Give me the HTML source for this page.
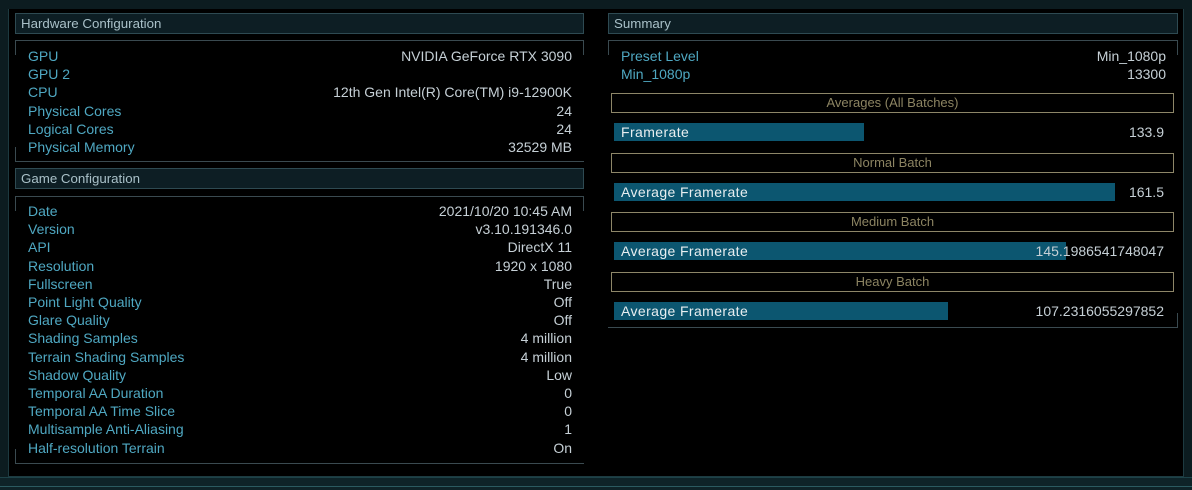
<!DOCTYPE html>
<html><head><meta charset="utf-8"><style>
*{margin:0;padding:0;box-sizing:border-box}
body{width:1192px;height:490px;background:#0c1c20;position:relative;overflow:hidden;font-family:"Liberation Sans",sans-serif;font-size:14px}
.inner{position:absolute;left:8px;top:9px;width:1176px;height:468px;background:#000;border:1px solid #1d3a40;border-top:none}
.bot{position:absolute;left:0;top:477px;width:1192px;height:13px;background:#0e2328;border-top:1px solid #1d4248}
.bot2{position:absolute;left:0;top:486px;width:1192px;height:1px;background:#2b5a60}
.hdr{position:absolute;height:21px;background:#0d1e24;border:1px solid #2e4a52;color:#a9c0c8;padding-left:5px;line-height:19px;font-size:13.3px}
.box{position:absolute;border-top:1px solid #3a4a50;border-bottom:1px solid #3a4a50}
.box:before,.box:after{content:"";position:absolute;top:0;width:1px;height:14px;background:#3a4a50}
.box:before{left:0}.box:after{right:0}
.cl{position:absolute;bottom:0;width:1px;height:14px;background:#3a4a50}
.row{position:absolute;left:13px;right:12px;height:18px;line-height:18px}
.row .l{color:#4fa8c2;float:left}
.row .v{color:#c6d0d6;float:right}
.sec{position:absolute;left:611px;width:563px;height:20px;border:1px solid #8d8668;color:#8c8462;text-align:center;line-height:18px;font-size:13px}
.bar{position:absolute;left:614px;height:18px;background:#0c5670;color:#e8eef0;padding-left:7px;line-height:18px;letter-spacing:0.4px}
.bv{position:absolute;right:28px;color:#c6d0d6;line-height:18px}
</style></head><body>
<div class="inner"></div>
<div class="bot"></div><div class="bot2"></div>

<div class="hdr" style="left:15px;top:13px;width:569px">Hardware Configuration</div>
<div class="box" style="left:15px;top:40px;width:569px;height:122px"><div class="cl" style="left:0"></div></div>
<div style="position:absolute;left:15px;top:47px;width:569px">
<div class="row" style="top:0"><span class="l">GPU</span><span class="v">NVIDIA GeForce RTX 3090</span></div>
<div class="row" style="top:18.2px"><span class="l">GPU 2</span></div>
<div class="row" style="top:36.4px"><span class="l">CPU</span><span class="v">12th Gen Intel(R) Core(TM) i9-12900K</span></div>
<div class="row" style="top:54.6px"><span class="l">Physical Cores</span><span class="v">24</span></div>
<div class="row" style="top:72.8px"><span class="l">Logical Cores</span><span class="v">24</span></div>
<div class="row" style="top:91px"><span class="l">Physical Memory</span><span class="v">32529 MB</span></div>
</div>

<div class="hdr" style="left:15px;top:168px;width:569px">Game Configuration</div>
<div class="box" style="left:15px;top:196px;width:569px;height:268px"><div class="cl" style="left:0"></div></div>
<div style="position:absolute;left:15px;top:202px;width:569px">
<div class="row" style="top:0"><span class="l">Date</span><span class="v">2021/10/20 10:45 AM</span></div>
<div class="row" style="top:18.2px"><span class="l">Version</span><span class="v">v3.10.191346.0</span></div>
<div class="row" style="top:36.4px"><span class="l">API</span><span class="v">DirectX 11</span></div>
<div class="row" style="top:54.6px"><span class="l">Resolution</span><span class="v">1920 x 1080</span></div>
<div class="row" style="top:72.8px"><span class="l">Fullscreen</span><span class="v">True</span></div>
<div class="row" style="top:91px"><span class="l">Point Light Quality</span><span class="v">Off</span></div>
<div class="row" style="top:109.2px"><span class="l">Glare Quality</span><span class="v">Off</span></div>
<div class="row" style="top:127.4px"><span class="l">Shading Samples</span><span class="v">4 million</span></div>
<div class="row" style="top:145.6px"><span class="l">Terrain Shading Samples</span><span class="v">4 million</span></div>
<div class="row" style="top:163.8px"><span class="l">Shadow Quality</span><span class="v">Low</span></div>
<div class="row" style="top:182px"><span class="l">Temporal AA Duration</span><span class="v">0</span></div>
<div class="row" style="top:200.2px"><span class="l">Temporal AA Time Slice</span><span class="v">0</span></div>
<div class="row" style="top:218.4px"><span class="l">Multisample Anti-Aliasing</span><span class="v">1</span></div>
<div class="row" style="top:236.6px"><span class="l">Half-resolution Terrain</span><span class="v">On</span></div>
</div>

<div class="hdr" style="left:608px;top:13px;width:570px">Summary</div>
<div class="box" style="left:608px;top:40px;width:570px;height:288px"><div class="cl" style="right:0"></div></div>
<div style="position:absolute;left:608px;top:47px;width:570px">
<div class="row" style="top:0"><span class="l">Preset Level</span><span class="v">Min_1080p</span></div>
<div class="row" style="top:18.2px"><span class="l">Min_1080p</span><span class="v">13300</span></div>
</div>
<div class="sec" style="top:93px">Averages (All Batches)</div>
<div class="bar" style="top:123px;width:250px">Framerate</div><div class="bv" style="top:123px">133.9</div>
<div class="sec" style="top:153px">Normal Batch</div>
<div class="bar" style="top:183px;width:501px">Average Framerate</div><div class="bv" style="top:183px">161.5</div>
<div class="sec" style="top:212px">Medium Batch</div>
<div class="bar" style="top:242px;width:452px">Average Framerate</div><div class="bv" style="top:242px">145.1986541748047</div>
<div class="sec" style="top:272px">Heavy Batch</div>
<div class="bar" style="top:302px;width:334px">Average Framerate</div><div class="bv" style="top:302px">107.2316055297852</div>
</body></html>
